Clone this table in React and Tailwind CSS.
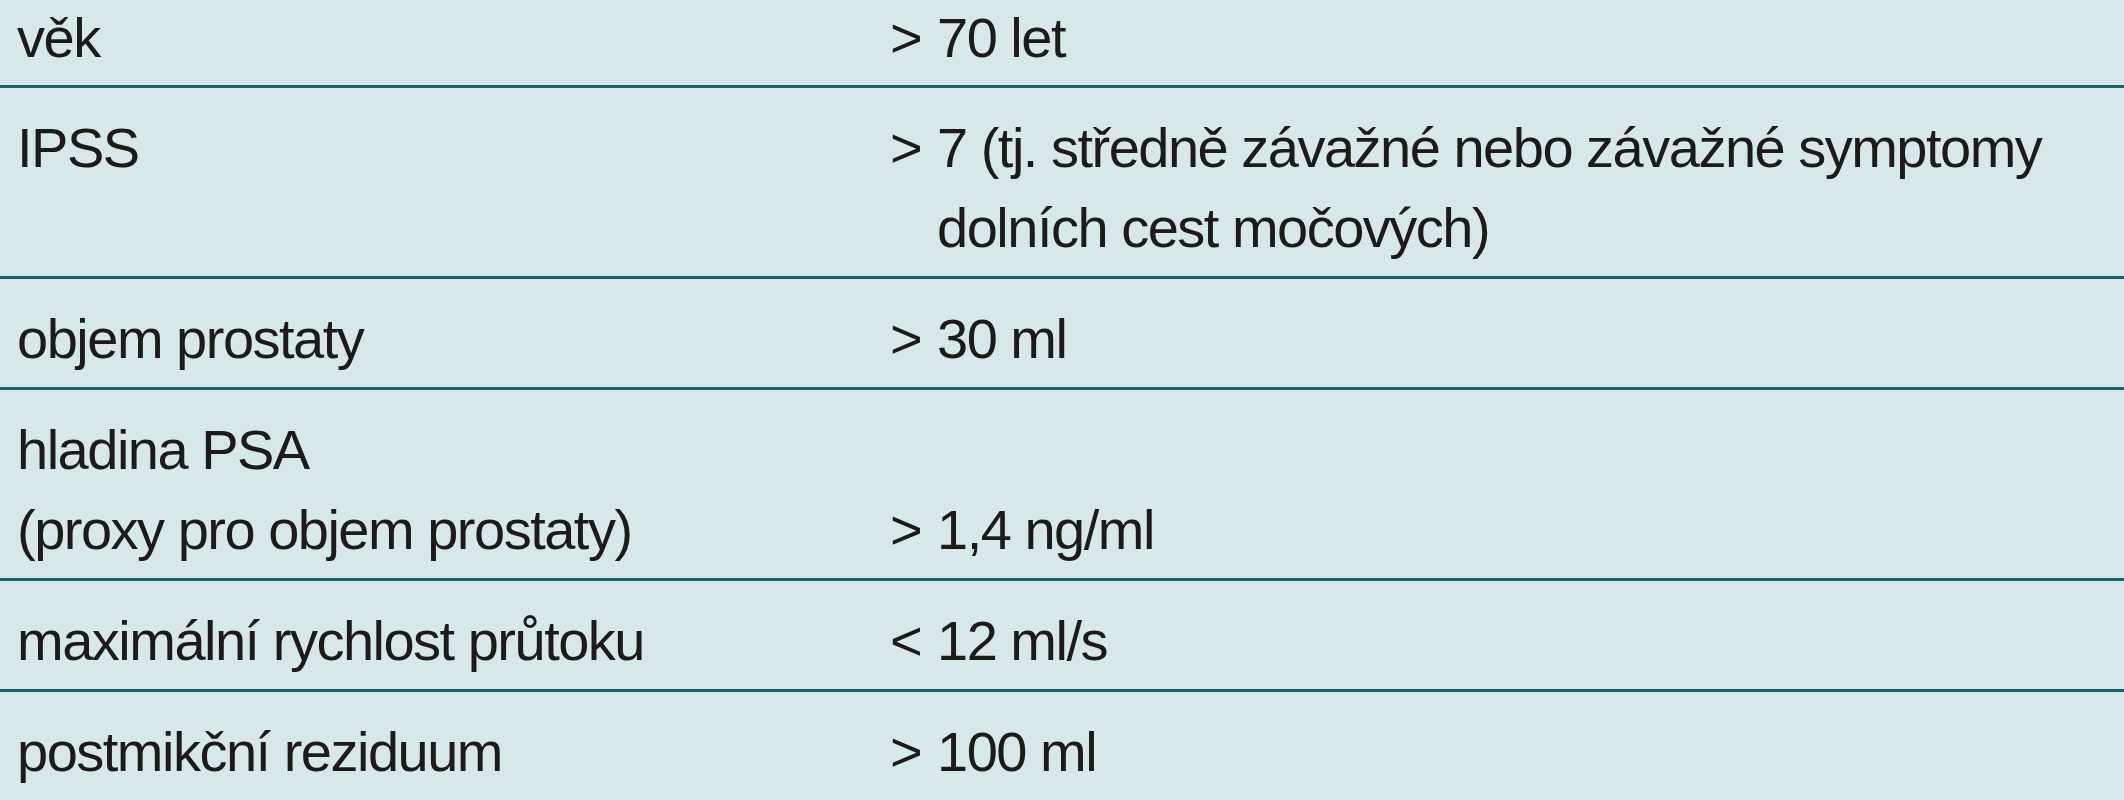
import React from "react";

const rows = [
  { label: ["věk"], value: "70 let", sign: ">" },
  {
    label: ["IPSS"],
    value: "7 (tj. středně závažné nebo závažné symptomy dolních cest močových)",
    sign: ">",
  },
  { label: ["objem prostaty"], value: "30 ml", sign: ">" },
  {
    label: ["hladina PSA", "(proxy pro objem prostaty)"],
    value: "1,4 ng/ml",
    sign: ">",
    bottom: true,
  },
  { label: ["maximální rychlost průtoku"], value: "12 ml/s", sign: "<" },
  { label: ["postmikční reziduum"], value: "100 ml", sign: ">" },
];

export default function App() {
  return (
    <div
      className="w-[2124px] h-[800px] overflow-hidden bg-[#d8e7e9] text-[#1c1a1a] text-[56px] tracking-[-1.5px]"
      style={{ fontFamily: '"Liberation Sans", Arial, sans-serif' }}
    >
      {rows.map((r, i) => (
        <div
          key={i}
          className={
            i === 0
              ? "flex pb-[10px] leading-[75px]"
              : "flex border-t-[3px] border-[#17636e] pt-[20px] pb-[8px] leading-[80px]"
          }
        >
          <div className="w-[890px] shrink-0 pl-[17px]">
            {r.label.map((l, j) => (
              <div key={j}>{l}</div>
            ))}
          </div>
          <div className={r.bottom ? "flex-1 flex flex-col justify-end" : "flex-1"}>
            <div className="flex pr-[10px]">
              <span className="w-[47px] shrink-0">{r.sign}</span>
              <span>{r.value}</span>
            </div>
          </div>
        </div>
      ))}
    </div>
  );
}
